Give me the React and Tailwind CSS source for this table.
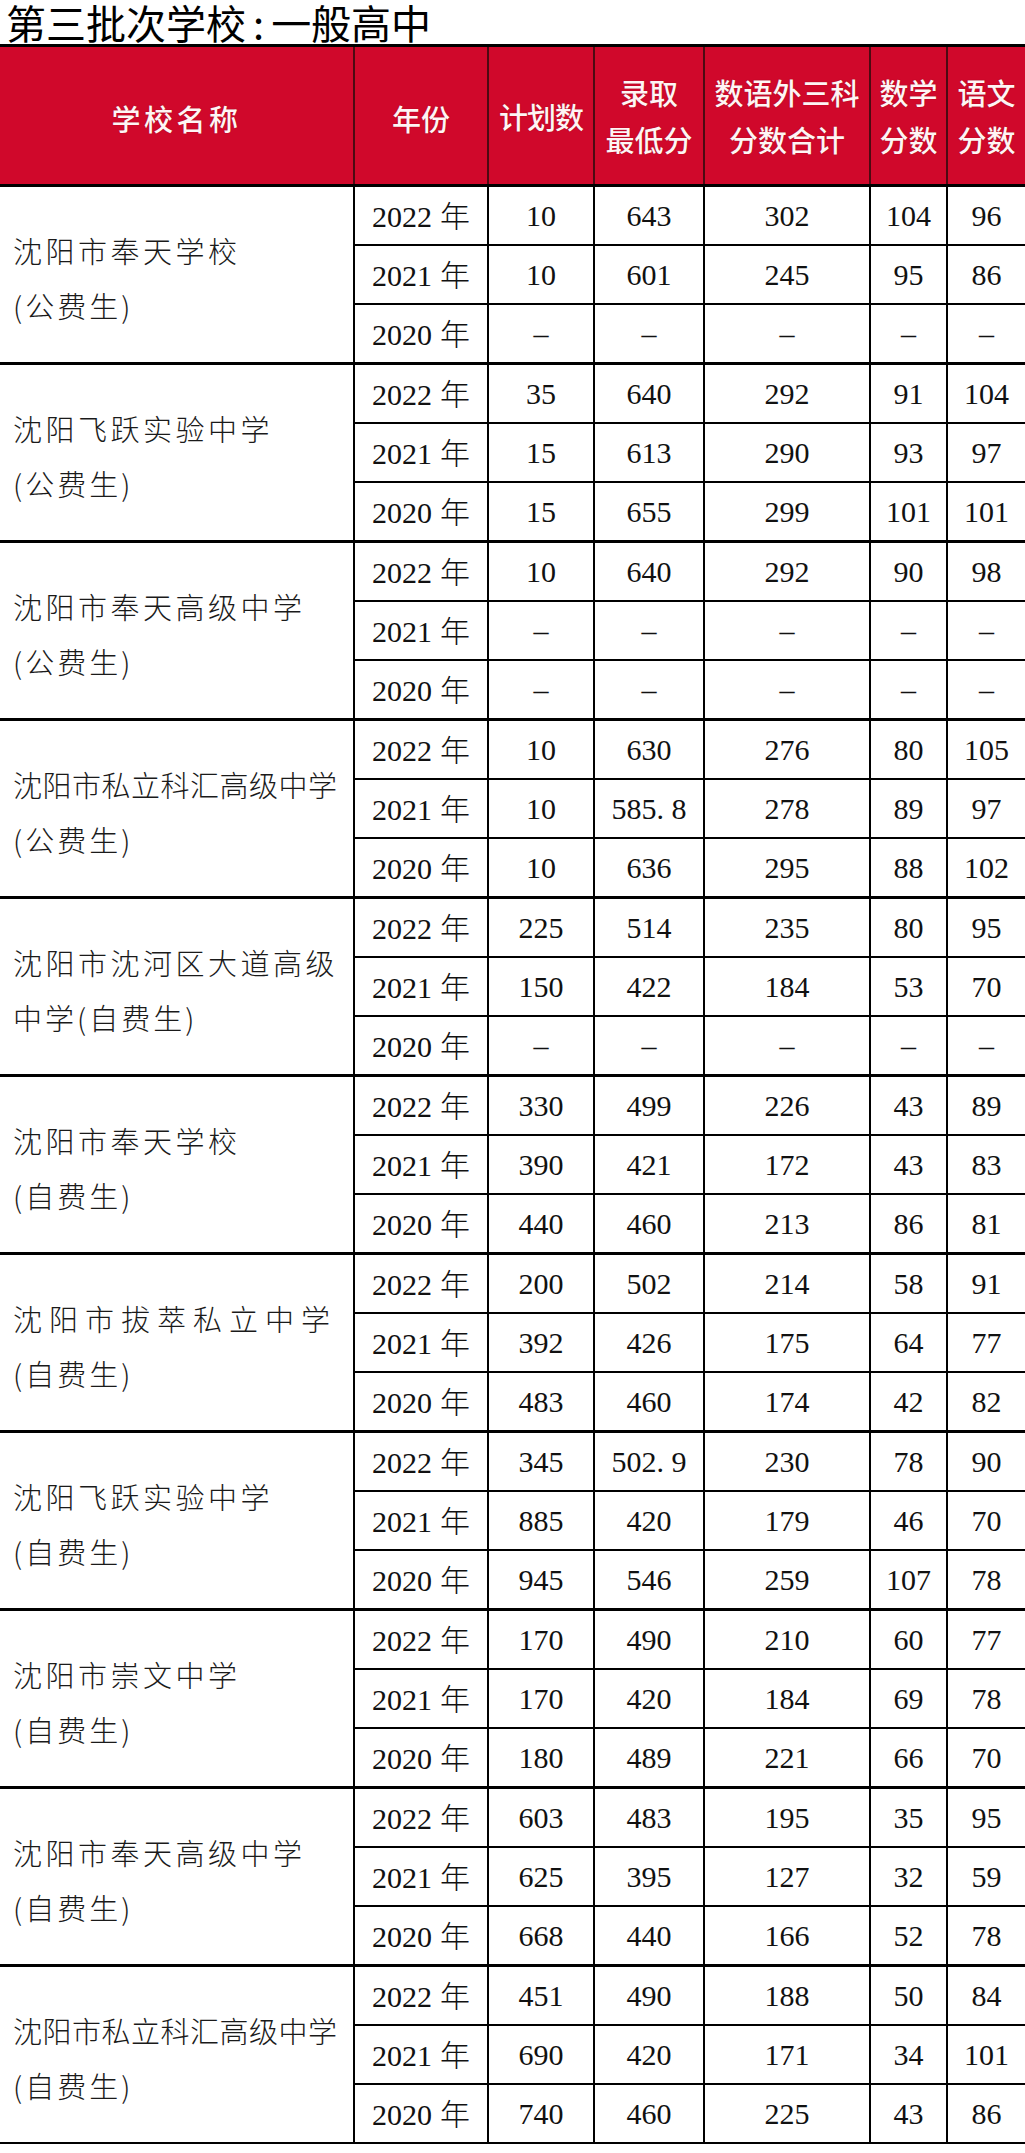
import React from "react";

const groups = [
  { name: ["沈阳市奉天学校", "(公费生)"], track: "tracking-[3.5px]", rows: [["2022", "10", "643", "302", "104", "96"], ["2021", "10", "601", "245", "95", "86"], ["2020", "–", "–", "–", "–", "–"]] },
  { name: ["沈阳飞跃实验中学", "(公费生)"], track: "tracking-[3.5px]", rows: [["2022", "35", "640", "292", "91", "104"], ["2021", "15", "613", "290", "93", "97"], ["2020", "15", "655", "299", "101", "101"]] },
  { name: ["沈阳市奉天高级中学", "(公费生)"], track: "tracking-[3.5px]", rows: [["2022", "10", "640", "292", "90", "98"], ["2021", "–", "–", "–", "–", "–"], ["2020", "–", "–", "–", "–", "–"]] },
  { name: ["沈阳市私立科汇高级中学", "(公费生)"], track: "tracking-[0.5px]", rows: [["2022", "10", "630", "276", "80", "105"], ["2021", "10", "585.8", "278", "89", "97"], ["2020", "10", "636", "295", "88", "102"]] },
  { name: ["沈阳市沈河区大道高级", "中学(自费生)"], track: "tracking-[3.5px]", rows: [["2022", "225", "514", "235", "80", "95"], ["2021", "150", "422", "184", "53", "70"], ["2020", "–", "–", "–", "–", "–"]] },
  { name: ["沈阳市奉天学校", "(自费生)"], track: "tracking-[3.5px]", rows: [["2022", "330", "499", "226", "43", "89"], ["2021", "390", "421", "172", "43", "83"], ["2020", "440", "460", "213", "86", "81"]] },
  { name: ["沈阳市拔萃私立中学", "(自费生)"], track: "tracking-[7px]", rows: [["2022", "200", "502", "214", "58", "91"], ["2021", "392", "426", "175", "64", "77"], ["2020", "483", "460", "174", "42", "82"]] },
  { name: ["沈阳飞跃实验中学", "(自费生)"], track: "tracking-[3.5px]", rows: [["2022", "345", "502.9", "230", "78", "90"], ["2021", "885", "420", "179", "46", "70"], ["2020", "945", "546", "259", "107", "78"]] },
  { name: ["沈阳市崇文中学", "(自费生)"], track: "tracking-[3.5px]", rows: [["2022", "170", "490", "210", "60", "77"], ["2021", "170", "420", "184", "69", "78"], ["2020", "180", "489", "221", "66", "70"]] },
  { name: ["沈阳市奉天高级中学", "(自费生)"], track: "tracking-[3.5px]", rows: [["2022", "603", "483", "195", "35", "95"], ["2021", "625", "395", "127", "32", "59"], ["2020", "668", "440", "166", "52", "78"]] },
  { name: ["沈阳市私立科汇高级中学", "(自费生)"], track: "tracking-[0.5px]", rows: [["2022", "451", "490", "188", "50", "84"], ["2021", "690", "420", "171", "34", "101"], ["2020", "740", "460", "225", "43", "86"]] },
];

const colW = ["w-[134px]", "w-[106px]", "w-[110px]", "w-[166px]", "w-[77px]", "flex-1"];

function Num({ v }) {
  if (v.includes(".")) {
    const [a, b] = v.split(".");
    return (
      <span>
        {a}
        <span className="inline-block w-[0.5em] text-left">.</span>
        {b}
      </span>
    );
  }
  return <span>{v}</span>;
}

function HeadCell({ w, children, border = true, extra = "" }) {
  return (
    <div
      className={`${w} flex flex-col items-center justify-center text-center ${border ? "border-r-2 border-[#4d0a12]" : ""} ${extra}`}
    >
      {children}
    </div>
  );
}

export default function App() {
  return (
    <div className="w-[1025px] h-[2153px] bg-white text-black font-['Liberation_Serif','Noto_Sans_CJK_SC',serif]">
      <div className="h-[44px] pl-[6px] text-[40px] leading-[44px] font-normal text-black font-['Noto_Sans_CJK_SC',sans-serif] whitespace-nowrap">
        第三批次学校<span className="mx-[7px]">:</span>一般高中
      </div>
      <div className="border-y-[3px] border-black">
        <div className="flex h-[137px] bg-[#d0082b] text-[#fff4f4] text-[29px] font-medium font-['Noto_Sans_CJK_SC',sans-serif] leading-[47px] [text-shadow:0_0_1px_rgba(80,0,0,0.6)]">
          <HeadCell w="w-[355px]" extra="tracking-[3.5px] pt-[6px]">学校名称</HeadCell>
          <HeadCell w="w-[134px]" extra="pt-[6px]">年份</HeadCell>
          <HeadCell w="w-[106px]" extra="tracking-[-1px] pt-[2px]">计划数</HeadCell>
          <HeadCell w="w-[110px]">
            <span>录取</span>
            <span>最低分</span>
          </HeadCell>
          <HeadCell w="w-[166px]">
            <span>数语外三科</span>
            <span>分数合计</span>
          </HeadCell>
          <HeadCell w="w-[77px]">
            <span>数学</span>
            <span>分数</span>
          </HeadCell>
          <HeadCell w="flex-1" border={false}>
            <span>语文</span>
            <span>分数</span>
          </HeadCell>
        </div>
      </div>
      {groups.map((g, gi) => (
        <div
          key={gi}
          className={`flex ${gi === groups.length - 1 ? "border-b-2" : "border-b-[3px]"} border-black`}
        >
          <div
            className={`w-[355px] border-r-2 border-black flex flex-col justify-center pl-[13px] pt-[7px] text-[29px] leading-[55px] text-[#1a1a1a] font-light font-['Noto_Sans_CJK_SC',sans-serif] ${g.track} whitespace-nowrap`}
          >
            <div>{g.name[0]}</div>
            <div className="tracking-[3px]">{g.name[1]}</div>
          </div>
          <div className="flex-1 flex flex-col">
            {g.rows.map((r, ri) => (
              <div
                key={ri}
                className={`flex ${ri < 2 ? "h-[59px] border-b-2 border-black" : "h-[57px]"}`}
              >
                {r.map((c, ci) => (
                  <div
                    key={ci}
                    className={`${colW[ci]} ${ci < 5 ? "border-r-2 border-black" : ""} flex items-center justify-center text-[30px] leading-[36px] text-[#111] whitespace-nowrap`}
                  >
                    {ci === 0 ? (
                      <span>
                        {c}
                        <span className="ml-[8px] font-['Noto_Sans_CJK_SC',sans-serif] font-light">年</span>
                      </span>
                    ) : (
                      <Num v={c} />
                    )}
                  </div>
                ))}
              </div>
            ))}
          </div>
        </div>
      ))}
    </div>
  );
}
